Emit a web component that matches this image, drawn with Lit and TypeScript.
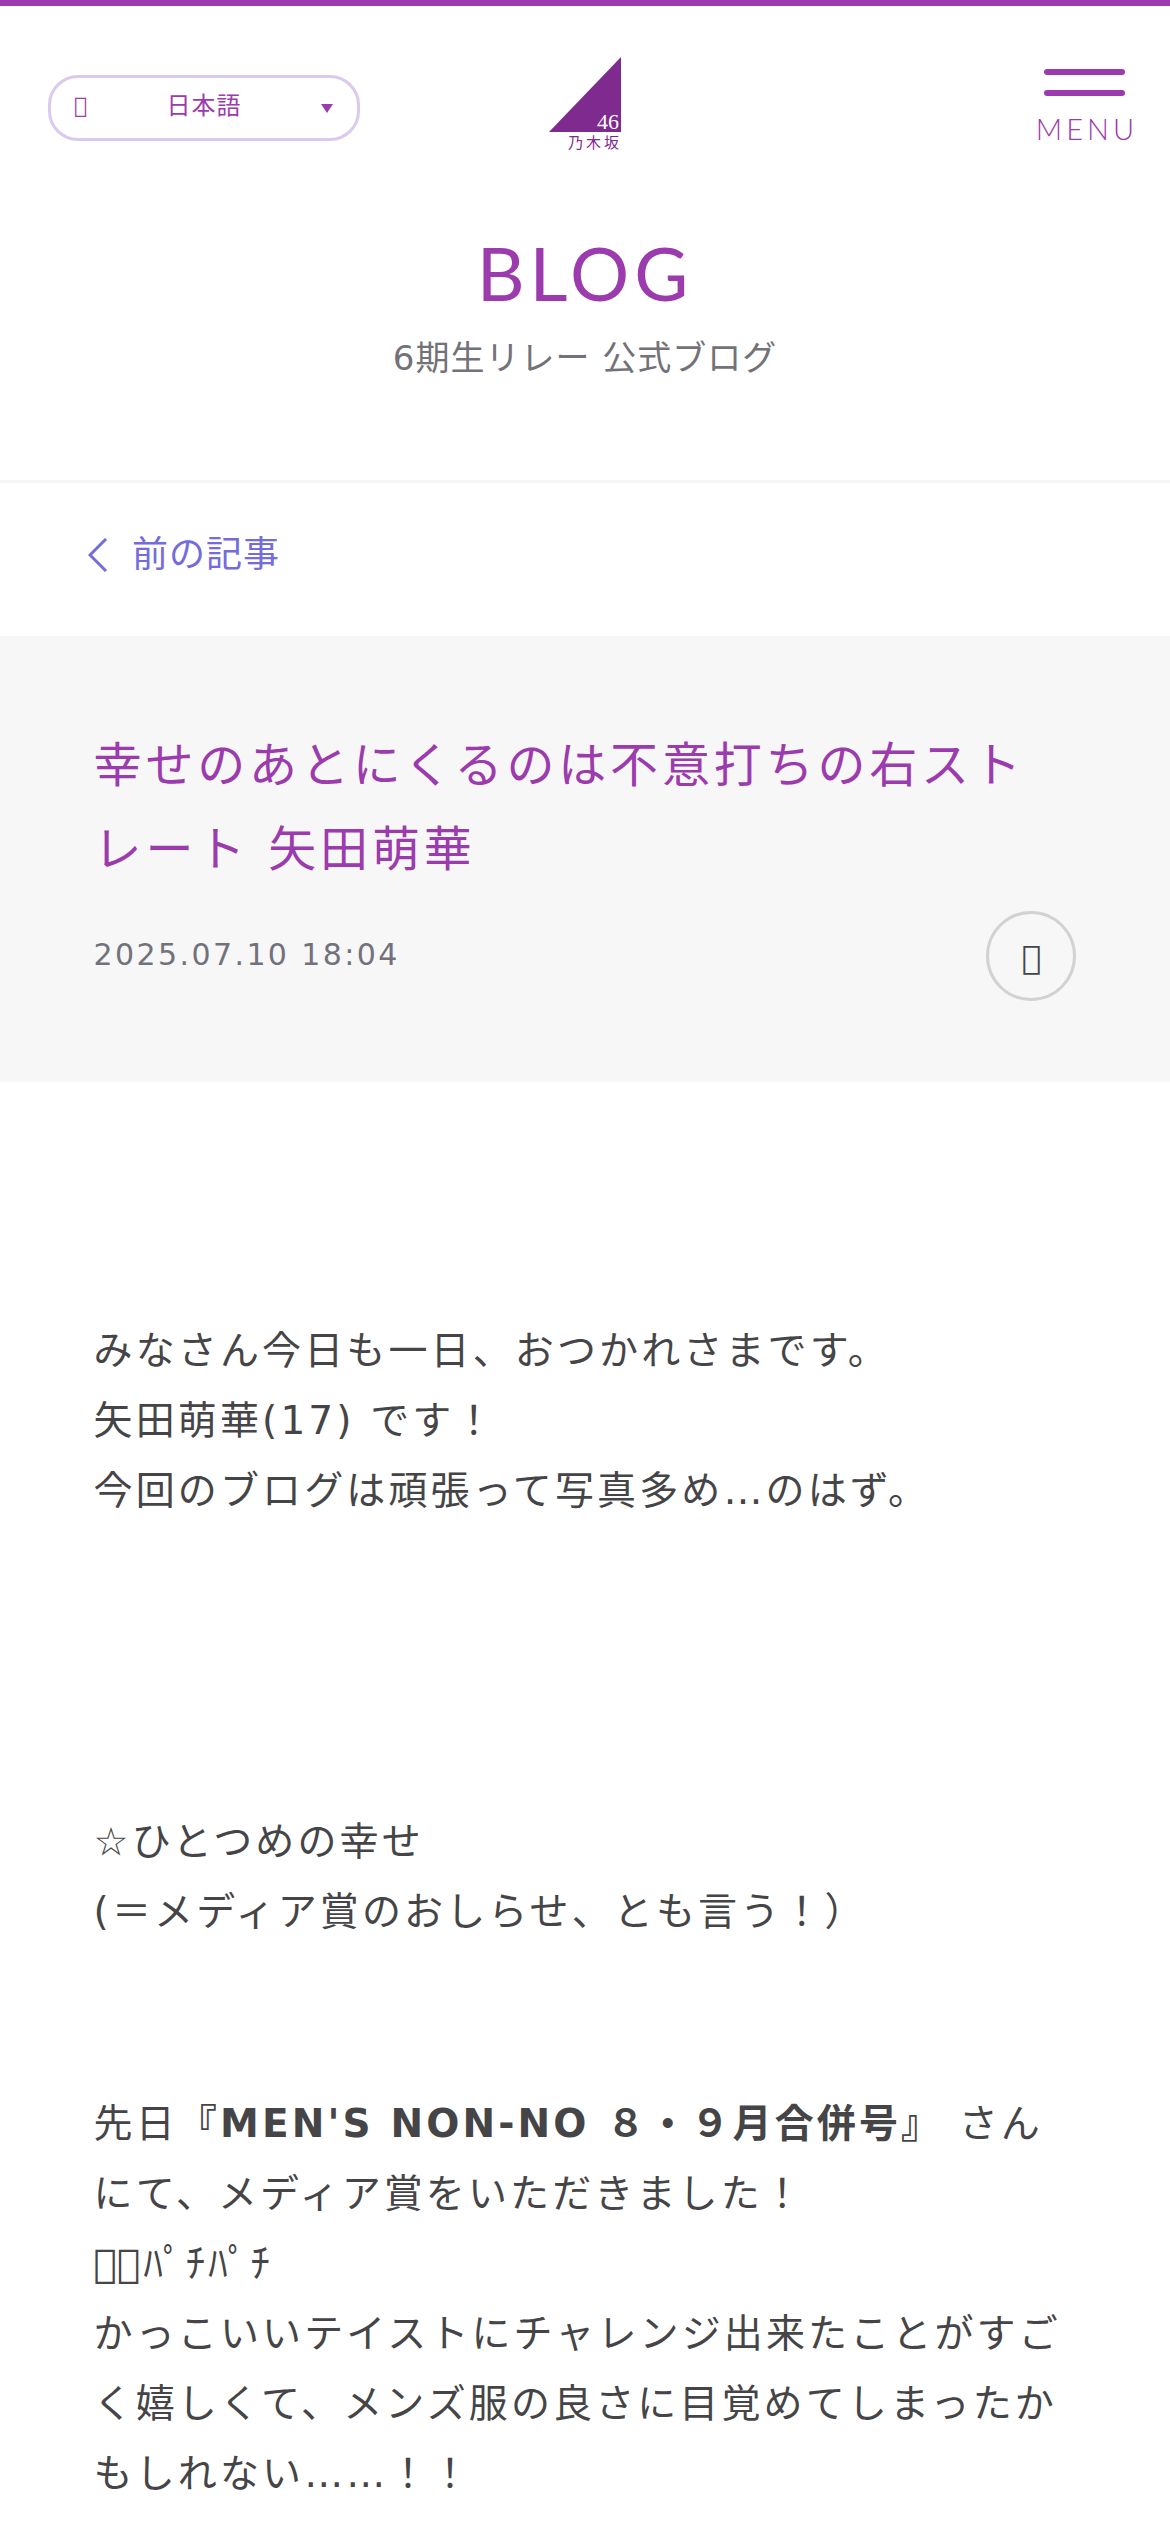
import { LitElement, html, css } from "lit";
import { customElement, state } from "lit/decorators.js";

@customElement("site-header")
class SiteHeader extends LitElement {
  @state() private lang = "日本語";

  static styles = css`
    :host {
      display: block;
      border-top: 6px solid #9b3bae;
      color: #9b3bae;
    }
    .bar {
      display: grid;
      grid-template-columns: 1fr auto 1fr;
      align-items: start;
      padding-top: 51px;
    }
    .lang {
      display: grid;
      align-items: center;
      justify-self: start;
      width: 312px;
      height: 66px;
      box-sizing: border-box;
      margin: 18px 0 0 48px;
      border: 3px solid #dccaee;
      border-radius: 30px;
      font-size: 24px;
    }
    .lang > * {
      grid-area: 1 / 1;
    }
    .globe {
      padding: 0 0 4px 23px;
      font-size: 22px;
      line-height: 32px;
    }
    .caret {
      justify-self: end;
      margin-right: 24px;
      width: 12px;
      height: 9px;
      fill: currentColor;
    }
    .select {
      appearance: none;
      width: 100%;
      height: 60px;
      padding: 0 0 4px;
      border: 0;
      border-radius: 30px;
      background: transparent;
      color: inherit;
      font: inherit;
      letter-spacing: 1px;
      text-align: center;
      text-align-last: center;
    }
    .logo {
      display: block;
      width: 72px;
      height: 96px;
    }
    .logo svg {
      display: block;
    }
    .menu {
      display: flex;
      flex-direction: column;
      align-items: center;
      justify-self: end;
      gap: 15px;
      margin: 12px 32px 0 0;
      padding: 0;
      border: 0;
      background: none;
      color: inherit;
    }
    .line {
      width: 81px;
      height: 6px;
      border-radius: 3px;
      background: currentColor;
    }
    .label {
      font: 300 29px/36px Lato, sans-serif;
      letter-spacing: 4px;
      padding-left: 4px;
    }
  `;

  render() {
    return html`
      <div class="bar">
        <div class="lang">
          <span class="globe" aria-hidden="true">&#xf0ac;</span>
          <svg class="caret" viewBox="0 0 12 9" aria-hidden="true"><path d="M0 0h12L6 9z" /></svg>
          <select
            class="select"
            aria-label="言語"
            @change=${(e: Event) => (this.lang = (e.target as HTMLSelectElement).value)}
          >
            <option>${this.lang}</option>
          </select>
        </div>
        <a class="logo" href="#" aria-label="乃木坂46">
          <svg width="72" height="96" viewBox="0 0 72 96">
            <path d="M0 75L72 0v75z" fill="#7e2a8e" />
            <text x="70" y="72" text-anchor="end" fill="#fff" font-family="Liberation Serif, serif" font-size="22">46</text>
            <text x="19" y="91" fill="#7e2a8e" font-family="Noto Sans CJK JP, sans-serif" font-size="15" letter-spacing="3">乃木坂</text>
          </svg>
        </a>
        <button class="menu" type="button">
          <span class="line"></span>
          <span class="line"></span>
          <span class="label">MENU</span>
        </button>
      </div>
    `;
  }
}

@customElement("article-head")
class ArticleHead extends LitElement {
  static styles = css`
    :host {
      display: block;
      padding: 87px 8% 81px;
      background: #f7f7f7;
    }
    .title {
      margin: 0 0 20px;
      color: #9b3bae;
      font-size: 48px;
      font-weight: 400;
      line-height: 84px;
      letter-spacing: 0.08em;
    }
    .meta {
      display: flex;
      align-items: center;
      justify-content: space-between;
    }
    .date {
      color: #72727c;
      font-size: 30px;
      line-height: 36px;
      letter-spacing: 0.08em;
      padding-bottom: 3px;
    }
    .share {
      width: 90px;
      height: 90px;
      padding: 3px 0 0;
      border: 3px solid #d2d2d4;
      border-radius: 50%;
      background: none;
      color: #454547;
      font: inherit;
      font-size: 33px;
      line-height: 36px;
    }
  `;

  render() {
    return html`
      <h2 class="title">幸せのあとにくるのは不意打ちの右ストレート 矢田萌華</h2>
      <div class="meta">
        <time class="date" datetime="2025-07-10T18:04">2025.07.10 18:04</time>
        <button class="share" type="button" aria-label="シェア">&#xf1e0;</button>
      </div>
    `;
  }
}

@customElement("app-root")
class AppRoot extends LitElement {
  static styles = css`
    :host {
      display: block;
      background: #fff;
      color: #454547;
      font-family: "DejaVu Sans", "Noto Sans CJK JP", sans-serif;
    }
    .heading {
      padding: 76px 0 98px;
      border-bottom: 3px solid #f6f6f6;
      text-align: center;
    }
    .name {
      margin: 0;
      color: #9b3bae;
      font: 400 74px/88px Lato, sans-serif;
      letter-spacing: 5px;
    }
    .sub {
      margin: 17px 0 0;
      color: #727278;
      font-size: 34px;
      line-height: 48px;
      letter-spacing: 1px;
    }
    .nav {
      display: flex;
      padding: 40px 88px 50px;
    }
    .back {
      display: flex;
      align-items: center;
      gap: 24px;
      color: #746bdd;
      font-size: 36px;
      line-height: 63px;
      letter-spacing: 1px;
      text-decoration: none;
    }
    .chevron {
      width: 20px;
      height: 34px;
      fill: none;
      stroke: currentColor;
      stroke-width: 3;
    }
    .body {
      padding: 234px 8% 16px;
      font-size: 39px;
      line-height: 70px;
      letter-spacing: 0.08em;
    }
    .para {
      margin: 0 0 142px;
    }
    .wide {
      margin-bottom: 281px;
    }
    .last {
      margin-bottom: 0;
    }
    .glyph {
      letter-spacing: 0;
    }
  `;

  render() {
    return html`
      <site-header></site-header>
      <header class="heading">
        <h1 class="name">BLOG</h1>
        <p class="sub">6期生リレー 公式ブログ</p>
      </header>
      <nav class="nav">
        <a class="back" href="#">
          <svg class="chevron" viewBox="0 0 20 34" aria-hidden="true"><path d="M18 1L2 17l16 16" /></svg>
          前の記事
        </a>
      </nav>
      <article>
        <article-head></article-head>
        <div class="body">
          <p class="para wide">
            みなさん今日も一日、おつかれさまです。<br />矢田萌華(17) です！<br />今回のブログは頑張って写真多め…のはず。
          </p>
          <p class="para">☆ひとつめの幸せ<br />(＝メディア賞のおしらせ、とも言う！）</p>
          <p class="para last">
            先日<b>『MEN'S NON-NO ８・９月合併号』</b> さんにて、メディア賞をいただきました！<br /><span class="glyph">&#xe41f;</span>&#xe41f;ﾊﾟﾁﾊﾟﾁ<br />かっこいいテイストにチャレンジ出来たことがすごく嬉しくて、メンズ服の良さに目覚めてしまったかもしれない……！！
          </p>
        </div>
      </article>
    `;
  }
}
